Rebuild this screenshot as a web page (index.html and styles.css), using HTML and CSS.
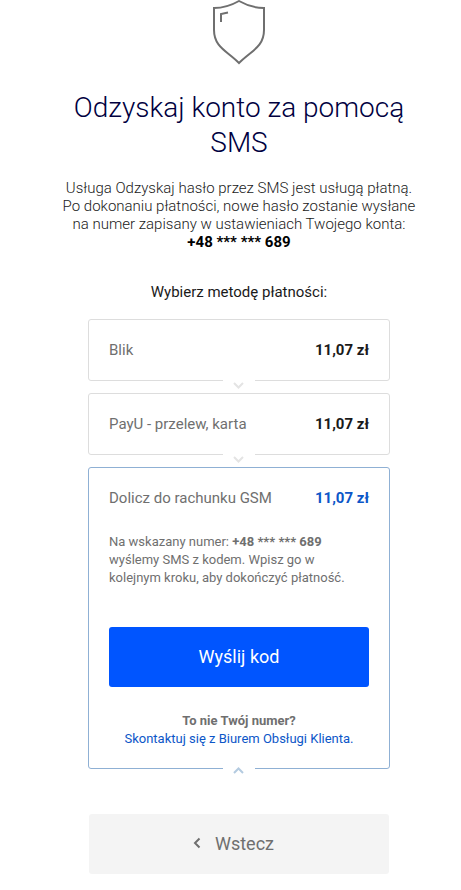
FILE: index.html
```html
<!DOCTYPE html>
<html lang="pl">

<head>
  <meta charset="UTF-8">
  <meta name="viewport" content="width=device-width, initial-scale=1.0">
  <title>Odzyskaj konto za pomocą SMS</title>
  <link rel="stylesheet" href="styles.css">
</head>

<body>
  <main class="page">
    <svg class="shield" viewBox="0 0 54 66" aria-hidden="true">
      <path d="M27 1 C20 5 11 8 2 8 V30 C2 47 15 51 27 63 C39 51 52 47 52 30 V8 C43 8 34 5 27 1 Z" />
      <path d="M9 22 V14 L16 12.5" />
    </svg>
    <h1 class="title">Odzyskaj konto za pomocą SMS</h1>
    <p class="intro">
      Usługa Odzyskaj hasło przez SMS jest usługą płatną.
      Po dokonaniu płatności, nowe hasło zostanie wysłane
      na numer zapisany w ustawieniach Twojego konta:
      <strong class="intro-phone">+48 *** *** 689</strong>
    </p>

    <h2 class="subtitle">Wybierz metodę płatności:</h2>

    <div class="methods">
      <section class="method">
        <button type="button" class="method-header" aria-expanded="false">
          <span class="method-name">Blik</span>
          <span class="method-price">11,07 zł</span>
        </button>
        <span class="method-toggle">
          <svg class="chevron" viewBox="0 0 12 8"><path d="M1 2 L5.5 6.5 L10 2" /></svg>
        </span>
      </section>

      <section class="method">
        <button type="button" class="method-header" aria-expanded="false">
          <span class="method-name">PayU - przelew, karta</span>
          <span class="method-price">11,07 zł</span>
        </button>
        <span class="method-toggle">
          <svg class="chevron" viewBox="0 0 12 8"><path d="M1 2 L5.5 6.5 L10 2" /></svg>
        </span>
      </section>

      <section class="method active">
        <button type="button" class="method-header" aria-expanded="true">
          <span class="method-name">Dolicz do rachunku GSM</span>
          <span class="method-price">11,07 zł</span>
        </button>
        <div class="method-body">
          <p class="method-info">
            Na wskazany numer: <strong>+48 *** *** 689</strong> wyślemy SMS z kodem. Wpisz go w kolejnym kroku, aby dokończyć płatność.
          </p>
          <button type="button" class="btn btn-primary">Wyślij kod</button>
          <p class="method-help">
            <strong>To nie Twój numer?</strong>
            <a href="#">Skontaktuj się z Biurem Obsługi Klienta.</a>
          </p>
        </div>
        <span class="method-toggle">
          <svg class="chevron" viewBox="0 0 12 8"><path d="M1 6 L5.5 1.5 L10 6" /></svg>
        </span>
      </section>
    </div>

    <button type="button" class="btn btn-back">
      <svg class="back-icon" viewBox="0 0 8 12" aria-hidden="true"><path d="M6.5 1.5 L2 6 L6.5 10.5" /></svg>
      Wstecz
    </button>
  </main>
</body>

</html>
```

FILE: styles.css
```css
:root {
  --navy: #00003f;
  --text: #1a1a1a;
  --muted: #6f6f6f;
  --primary: #0055ff;
  --link: #0c56c8;
  --border: #dddddd;
  --border-active: #8fb0d4;
}

* {
  margin: 0;
  padding: 0;
  box-sizing: border-box;
}

body {
  font-family: Roboto, "Liberation Sans", sans-serif;
  font-size: 15px;
  line-height: 18px;
  color: var(--text);
  background: #fff;
}

button {
  font-family: inherit;
  border: none;
  cursor: pointer;
}

.page {
  display: flex;
  flex-direction: column;
  align-items: center;
  padding: 0 0 16px 17px;
}

.shield {
  width: 54px;
  height: 66px;
  fill: none;
  stroke: #6f6f6f;
  stroke-width: 2;
}

.title {
  max-width: 360px;
  margin-top: 24px;
  font-size: 28px;
  font-weight: 300;
  line-height: 35px;
  text-align: center;
  color: var(--navy);
}

.intro {
  max-width: 360px;
  margin-top: 19px;
  font-weight: 300;
  text-align: center;
}

.intro-phone {
  display: block;
  font-weight: 700;
  color: #000;
}

.subtitle {
  margin-top: 32px;
  font-size: 15px;
  font-weight: 400;
}

.methods {
  display: flex;
  flex-direction: column;
  gap: 12px;
  width: 100%;
  max-width: 302px;
  margin-top: 18px;
}

.method {
  position: relative;
  border: 1px solid var(--border);
  border-radius: 3px;
}

.method-header {
  display: flex;
  justify-content: space-between;
  align-items: center;
  width: 100%;
  height: 60px;
  padding: 0 20px;
  font-size: 15px;
  background: none;
}

.method-name {
  color: var(--muted);
}

.method-price {
  font-weight: 700;
  color: var(--text);
}

/* sits on the bottom border and cuts a gap in it */
.method-toggle {
  position: absolute;
  bottom: -9px;
  left: 50%;
  display: flex;
  justify-content: center;
  width: 32px;
  padding-top: 4px;
  background: #fff;
  transform: translateX(-50%);
}

.chevron {
  width: 12px;
  height: 8px;
  fill: none;
  stroke: #e4e4e4;
  stroke-width: 2;
}

.active {
  border-color: var(--border-active);
}

.active .method-toggle {
  bottom: -7px;
}

.active .method-price {
  color: var(--link);
}

.active .chevron {
  stroke: #b4cbe0;
}

.method-body {
  padding: 5px 20px 20px;
  font-size: 13px;
  color: var(--muted);
}

.btn {
  display: flex;
  justify-content: center;
  align-items: center;
  width: 100%;
  height: 60px;
  padding-bottom: 2px;
  font-size: 18px;
  border-radius: 3px;
}

.btn-primary {
  margin-top: 40px;
  color: #fff;
  background: var(--primary);
}

.method-help {
  margin-top: 25px;
  text-align: center;
}

.method-help a {
  display: block;
  color: var(--link);
  text-decoration: none;
}

.btn-back {
  gap: 14px;
  max-width: 300px;
  margin-top: 45px;
  padding-right: 11px;
  color: var(--muted);
  background: #f4f4f4;
}

.back-icon {
  width: 8px;
  height: 12px;
  fill: none;
  stroke: currentColor;
  stroke-width: 2;
}
```
